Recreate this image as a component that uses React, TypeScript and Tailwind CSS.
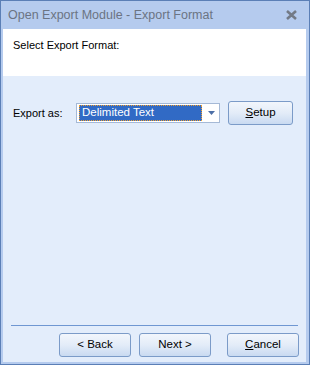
import React from "react";

const font = { fontFamily: '"Liberation Sans", Arial, sans-serif' };

function Btn({ children, className = "" }: { children: React.ReactNode; className?: string }) {
  return (
    <div
      className={`flex items-center justify-center h-[24px] rounded-[3px] border border-[#7b9bc8] bg-gradient-to-b from-[#f2f6fc] via-[#e3ecf8] to-[#c9daf1] text-[11.5px] text-black ${className}`}
    >
      {children}
    </div>
  );
}

export default function App() {
  return (
    <div
      className="w-[310px] h-[365px] flex flex-col bg-[#b5cbee] border border-[#5b7fb6] pl-[2px] pr-[3px] pb-[2px]"
      style={font}
    >
      <div className="h-[28px] flex items-center justify-between pl-[5px] pr-[9px]">
        <span className="text-[12.5px] text-[#6b7483]">Open Export Module - Export Format</span>
        <svg width="11" height="10" viewBox="0 0 11 10">
          <path d="M1 1l9 8M10 1l-9 8" stroke="#737a86" strokeWidth="2.6" />
        </svg>
      </div>
      <div className="h-[47px] bg-white pl-[10px] pt-[8px] text-[11px] text-black">Select Export Format:</div>
      <div className="flex-1 flex flex-col bg-[#e3edfb]">
        <div className="flex items-center mt-[25px] pl-[10px]">
          <span className="w-[63px] text-[11px] text-black">Export as:</span>
          <div className="w-[144px] h-[20px] bg-white border border-[#a5b9d6] flex items-center pl-[2px] pr-[4px]">
            <div className="w-[123px] h-[16px] bg-[#316ac5] border border-dotted border-[#f0a030] flex items-center pl-[2px] text-[11.5px] text-white">
              Delimited Text
            </div>
            <div className="flex-1 flex justify-end">
              <svg width="7" height="4" viewBox="0 0 7 4">
                <path d="M0 0h7L3.5 4z" fill="#4d6fa6" />
              </svg>
            </div>
          </div>
          <Btn className="w-[65px] ml-[8px]">
            <span>
              <u>S</u>etup
            </span>
          </Btn>
        </div>
        <div className="flex-1" />
        <div className="mx-[8px] h-px bg-[#6f97d2]" />
        <div className="flex justify-end gap-[8px] pr-[7px] pt-[7px] pb-[5px]">
          <Btn className="w-[72px]">&lt; Back</Btn>
          <Btn className="w-[72px] mr-[8px]">Next &gt;</Btn>
          <Btn className="w-[72px]">
            <span>
              <u>C</u>ancel
            </span>
          </Btn>
        </div>
      </div>
    </div>
  );
}
